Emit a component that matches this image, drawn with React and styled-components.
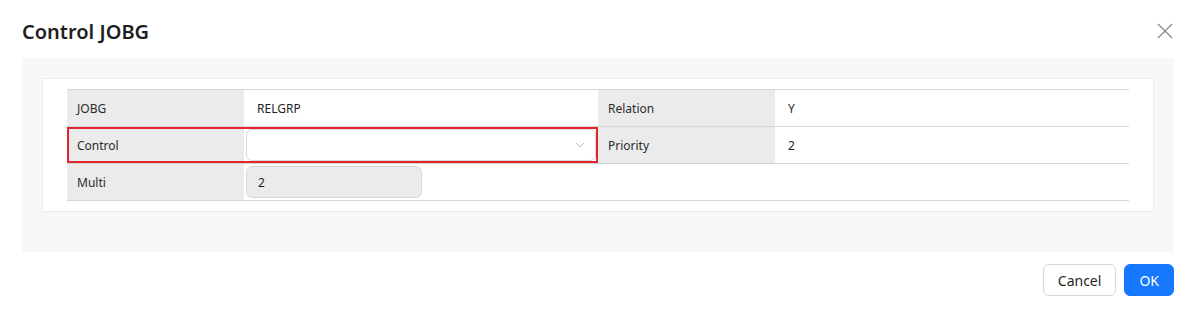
import styled, { createGlobalStyle } from "styled-components";

const GlobalStyle = createGlobalStyle`
  html, body {
    margin: 0;
    padding: 0;
    background: #fff;
  }
  body {
    font-family: "Noto Sans", "Open Sans", sans-serif;
    color: #222;
  }
  * {
    box-sizing: border-box;
  }
`;

const ROWS = [
  [
    { label: "JOBG", value: "RELGRP" },
    { label: "Relation", value: "Y" },
  ],
  [
    { label: "Control", type: "select", error: true },
    { label: "Priority", value: "2" },
  ],
  [{ label: "Multi", type: "readonly", value: "2" }, null],
];

export default function App() {
  return (
    <>
      <GlobalStyle />
      <Modal>
        <Header>
          <Title>Control JOBG</Title>
          <CloseButton aria-label="close">
            <svg width="16" height="16" viewBox="0 0 16 16">
              <path
                d="M1 1 L15 15 M15 1 L1 15"
                stroke="#8c8c8c"
                strokeWidth="1.4"
                fill="none"
              />
            </svg>
          </CloseButton>
        </Header>

        <Body>
          <Panel>
            <Table>
              {ROWS.map((row, i) => (
                <Row key={i}>
                  {row.map((field, j) =>
                    field ? (
                      <Field key={j} $error={field.error}>
                        <Label>{field.label}</Label>
                        <Value>
                          {field.type === "select" && (
                            <Select>
                              <svg width="10" height="6" viewBox="0 0 10 6">
                                <path
                                  d="M1 1 L5 5 L9 1"
                                  stroke="#bfbfbf"
                                  strokeWidth="1"
                                  fill="none"
                                />
                              </svg>
                            </Select>
                          )}
                          {field.type === "readonly" && (
                            <ReadOnly>{field.value}</ReadOnly>
                          )}
                          {!field.type && <Text>{field.value}</Text>}
                        </Value>
                      </Field>
                    ) : (
                      <EmptyField key={j} />
                    )
                  )}
                </Row>
              ))}
            </Table>
          </Panel>
        </Body>

        <Footer>
          <Button>Cancel</Button>
          <Button $primary>OK</Button>
        </Footer>
      </Modal>
    </>
  );
}

const Modal = styled.div`
  width: 1196px;
  height: 315px;
  background: #fff;
  display: flex;
  flex-direction: column;
`;

const Header = styled.div`
  display: flex;
  justify-content: space-between;
  align-items: flex-start;
  padding: 18px 22px 12px;
`;

const Title = styled.h2`
  margin: 0;
  font-size: 20px;
  line-height: 28px;
  font-weight: 600;
  color: #1f1f1f;
`;

const CloseButton = styled.button`
  border: none;
  background: none;
  padding: 0;
  margin-top: 5px;
  margin-right: 1px;
  cursor: pointer;
  display: flex;
`;

const Body = styled.div`
  margin: 0 22px;
  background: #f7f8fa;
  padding: 20px 20px 40px;
`;

const Panel = styled.div`
  background: #fff;
  border: 1px solid #ececec;
  padding: 10px 24px;
`;

const Table = styled.div`
  border-top: 1px solid #d6d6d6;
`;

const Row = styled.div`
  display: flex;
  height: 37px;
  border-bottom: 1px solid #d6d6d6;
`;

const Field = styled.div`
  flex: 1;
  display: flex;
  outline: ${(p) => (p.$error ? "2px solid #e3262d" : "none")};
  outline-offset: -2px;
  position: relative;
`;

const EmptyField = styled.div`
  flex: 1;
`;

const Label = styled.div`
  width: 177px;
  flex-shrink: 0;
  background: #ebebeb;
  display: flex;
  align-items: center;
  padding-left: 10px;
  font-size: 12px;
  color: #2b2b2b;
`;

const Value = styled.div`
  flex: 1;
  display: flex;
  align-items: center;
  padding: 2px;
  font-size: 12px;
`;

const Text = styled.span`
  padding-left: 11px;
  color: #1f1f1f;
`;

const Select = styled.div`
  width: 100%;
  height: 32px;
  border: 1px solid #d9d9d9;
  border-radius: 6px;
  background: #fff;
  display: flex;
  align-items: center;
  justify-content: flex-end;
  padding-right: 10px;
`;

const ReadOnly = styled.div`
  width: 176px;
  height: 32px;
  border: 1px solid #d9d9d9;
  border-radius: 6px;
  background: #ebebeb;
  display: flex;
  align-items: center;
  padding-left: 11px;
  font-size: 12px;
  color: #1f1f1f;
`;

const Footer = styled.div`
  display: flex;
  justify-content: flex-end;
  gap: 8px;
  padding: 12px 22px 19px;
`;

const Button = styled.button`
  height: 32px;
  padding: 0 14px;
  border-radius: 6px;
  font-family: "Noto Sans", "Open Sans", sans-serif;
  font-size: 14px;
  cursor: pointer;
  border: 1px solid ${(p) => (p.$primary ? "#1677ff" : "#d9d9d9")};
  background: ${(p) => (p.$primary ? "#1677ff" : "#fff")};
  color: ${(p) => (p.$primary ? "#fff" : "#1f1f1f")};
`;
